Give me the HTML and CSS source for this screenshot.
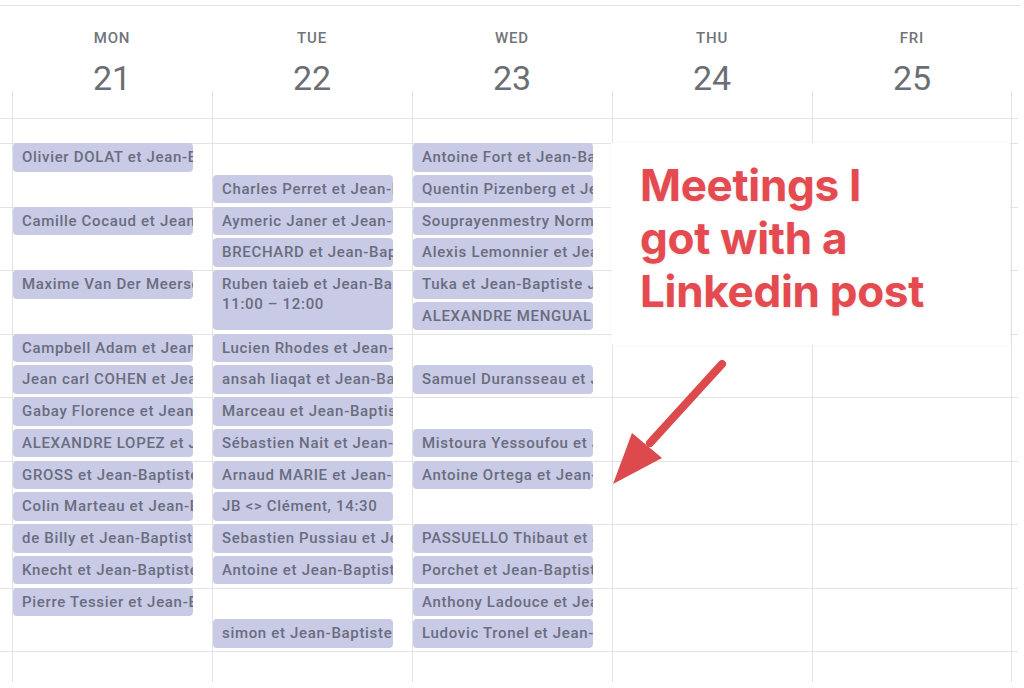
FILE: index.html
```html
<!DOCTYPE html>
<html lang="en">
  <head>
    <meta charset="UTF-8" />
    <meta name="viewport" content="width=device-width, initial-scale=1.0" />
    <title>Week view</title>
    <link rel="stylesheet" href="styles.css">
  </head>
  <body>
    <div class="topline"></div>

    <div class="head">
      <div class="day-head"><div class="dname">MON</div><div class="dnum">21</div></div>
      <div class="day-head"><div class="dname">TUE</div><div class="dnum">22</div></div>
      <div class="day-head"><div class="dname">WED</div><div class="dnum">23</div></div>
      <div class="day-head"><div class="dname">THU</div><div class="dnum">24</div></div>
      <div class="day-head"><div class="dname">FRI</div><div class="dnum">25</div></div>
    </div>

    <div class="sheet">
      <div class="lines">
        <div class="row allday"></div>
        <div class="row allday2"></div>
        <div class="row hour"></div>
        <div class="row hour"></div>
        <div class="row hour"></div>
        <div class="row hour"></div>
        <div class="row hour"></div>
        <div class="row hour"></div>
        <div class="row hour"></div>
        <div class="row hour"></div>
        <div class="row hour"></div>
      </div>

      <div class="days">
        <!-- Monday -->
        <div class="day">
          <div class="ev">Olivier DOLAT et Jean-Baptiste</div>
          <div></div>
          <div class="ev">Camille Cocaud et Jean-Baptiste</div>
          <div></div>
          <div class="ev">Maxime Van Der Meersch et Jean-Baptiste</div>
          <div></div>
          <div class="ev">Campbell Adam et Jean-Baptiste</div>
          <div class="ev">Jean carl COHEN et Jean-Baptiste</div>
          <div class="ev">Gabay Florence et Jean-Baptiste</div>
          <div class="ev">ALEXANDRE LOPEZ et Jean-Baptiste</div>
          <div class="ev">GROSS et Jean-Baptiste</div>
          <div class="ev">Colin Marteau et Jean-Baptiste</div>
          <div class="ev">de Billy et Jean-Baptiste</div>
          <div class="ev">Knecht et Jean-Baptiste</div>
          <div class="ev">Pierre Tessier et Jean-Baptiste</div>
        </div>

        <!-- Tuesday -->
        <div class="day">
          <div></div>
          <div class="ev">Charles Perret et Jean-Baptiste</div>
          <div class="ev">Aymeric Janer et Jean-Baptiste</div>
          <div class="ev">BRECHARD et Jean-Baptiste</div>
          <div class="ev long">Ruben taieb et Jean-Baptiste<br />11:00 – 12:00</div>
          <div class="ev">Lucien Rhodes et Jean-Baptiste</div>
          <div class="ev">ansah liaqat et Jean-Baptiste</div>
          <div class="ev">Marceau et Jean-Baptiste</div>
          <div class="ev">Sébastien Nait et Jean-Baptiste</div>
          <div class="ev">Arnaud MARIE et Jean-Baptiste</div>
          <div class="ev">JB &lt;&gt; Clément, 14:30</div>
          <div class="ev">Sebastien Pussiau et Jean-Baptiste</div>
          <div class="ev">Antoine et Jean-Baptiste</div>
          <div></div>
          <div class="ev">simon et Jean-Baptiste</div>
        </div>

        <!-- Wednesday -->
        <div class="day">
          <div class="ev">Antoine Fort et Jean-Baptiste</div>
          <div class="ev">Quentin Pizenberg et Jean-Baptiste</div>
          <div class="ev">Souprayenmestry Normand et Jean-Baptiste</div>
          <div class="ev">Alexis Lemonnier et Jean-Baptiste</div>
          <div class="ev">Tuka et Jean-Baptiste Jean-Baptiste</div>
          <div class="ev">ALEXANDRE MENGUAL et Jean-Baptiste</div>
          <div></div>
          <div class="ev">Samuel Duransseau et Jean-Baptiste</div>
          <div></div>
          <div class="ev">Mistoura Yessoufou et Jean-Baptiste</div>
          <div class="ev">Antoine Ortega et Jean-Baptiste</div>
          <div></div>
          <div class="ev">PASSUELLO Thibaut et Jean-Baptiste</div>
          <div class="ev">Porchet et Jean-Baptiste</div>
          <div class="ev">Anthony Ladouce et Jean-Baptiste</div>
          <div class="ev">Ludovic Tronel et Jean-Baptiste</div>
        </div>

        <div class="day"></div>
        <div class="day"></div>
      </div>

      <div class="note">Meetings I<br />got with a<br />Linkedin post</div>

      <svg class="arrow" width="140" height="150" viewBox="0 0 140 150">
        <line x1="122" y1="14" x2="50" y2="93" stroke="#dc4a4d" stroke-width="8" stroke-linecap="round" />
        <polygon points="13,134 32,83 62,108" fill="#dc4a4d" />
      </svg>
    </div>
  </body>
</html>
```

FILE: styles.css
```css
body {
  margin: 0;
  background-color: #fff;
  font-family: Roboto, "Liberation Sans", sans-serif;
  color: #70757a;
  width: 1024px;
  height: 688px;
  overflow: hidden;
}

.topline {
  width: 1020px;
  height: 5px;
  border-bottom: 1px solid #e3e3e3;
}

/* Day header */
.head {
  display: flex;
  padding-left: 12px;
  height: 85px;
}

.day-head {
  width: 200px;
  text-align: center;
  padding-top: 22px;
  box-sizing: border-box;
}

.dname {
  font-size: 15px;
  font-weight: 500;
  letter-spacing: 0.8px;
  line-height: 20px;
}

.dnum {
  margin-top: 17px;
  font-size: 34px;
  line-height: 26px;
  color: #6b6f74;
}

/* Grid */
.sheet {
  position: relative;
  display: grid;
  width: 1018px;
  height: 591px;
  overflow: hidden;
}

.lines,
.days {
  grid-area: 1 / 1;
}

.row {
  box-sizing: border-box;
  border-bottom: 1px solid #e3e3e3;
}

.allday {
  height: 28px;
}

.allday2 {
  height: 25px;
}

.hour {
  height: 63.5px;
}

.days {
  display: flex;
  padding-left: 12px;
}

.day {
  width: 200px;
  box-sizing: border-box;
  border-left: 1px solid #e3e3e3;
  padding-top: 52px;
  display: grid;
  grid-auto-rows: 31.75px;
  align-content: start;
}

.day:last-child {
  border-right: 1px solid #e3e3e3;
}

/* Events */
.ev {
  height: 28.5px;
  margin-right: 19px;
  box-sizing: border-box;
  padding: 4px 1px 0 9px;
  background-color: #c8cae6;
  border-radius: 4px;
  color: #6a6d7e;
  font-size: 15px;
  font-weight: 500;
  letter-spacing: 0.68px;
  line-height: 20px;
  white-space: nowrap;
  overflow: hidden;
}

.ev.long {
  grid-row: span 2;
  height: 60px;
}

/* Annotation */
.note {
  position: absolute;
  left: 611px;
  top: 52px;
  width: 399px;
  height: 202px;
  box-sizing: border-box;
  padding: 16px 0 0 29px;
  background-color: #fff;
  box-shadow: 0 0 3px rgba(0, 0, 0, 0.06);
  font-family: Inter, "Liberation Sans", sans-serif;
  font-weight: 700;
  font-size: 44px;
  line-height: 53px;
  letter-spacing: -0.3px;
  color: #e44a4f;
  text-shadow: 0 1px 3px rgba(0, 0, 0, 0.12);
}

.arrow {
  position: absolute;
  left: 600px;
  top: 259px;
}
```
